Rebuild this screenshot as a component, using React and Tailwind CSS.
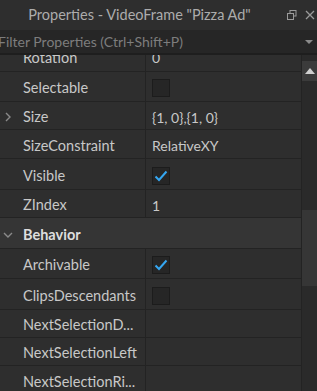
const font = { fontFamily: "Lato, 'Noto Sans', sans-serif" };

function Chevron({ down }) {
  return (
    <svg width="10" height="10" viewBox="0 0 10 10" className="absolute left-[3px]">
      <path
        d={down ? "M1 3 L5 7 L9 3" : "M3 1 L7 5 L3 9"}
        fill="none"
        stroke="#8a8a8a"
        strokeWidth="1.4"
      />
    </svg>
  );
}

function Checkbox({ checked }) {
  return (
    <div className="w-[18px] h-[18px] bg-[#262626] border border-[#1c1c1c] flex items-center justify-center">
      {checked && (
        <svg width="16" height="16" viewBox="0 0 16 16">
          <path d="M2.5 8.5 L6 12 L13.5 3.5" fill="none" stroke="#35a7f2" strokeWidth="2" />
        </svg>
      )}
    </div>
  );
}

function Row({ label, value, h, expand }) {
  return (
    <div className={`flex border-b border-[#232323] ${h}`}>
      <div className="w-[146px] shrink-0 flex items-center relative border-r border-[#232323] pt-[3px]">
        {expand && <Chevron />}
        <span className="pl-[23px] text-[14.5px] text-[#c8c8c8] whitespace-nowrap">{label}</span>
      </div>
      <div className="flex-1 flex items-center pl-[6px] text-[14px] text-[#c8c8c8] pt-[3px]">{value}</div>
    </div>
  );
}

export default function App() {
  return (
    <div className="w-[317px] h-[391px] bg-[#2e2e2e] overflow-hidden flex flex-col" style={font}>
      <div className="h-[30px] shrink-0 flex items-center bg-[#2e2e2e]">
        <div className="flex-1 text-center text-[14.5px] text-[#acacac] pr-[8px] whitespace-nowrap">
          Properties - VideoFrame "Pizza Ad"
        </div>
        <div className="flex items-center gap-[8px] pr-[2px]">
          <svg width="10" height="10" viewBox="0 0 10 10">
            <rect x="3" y="0.5" width="6" height="5.5" fill="none" stroke="#9a9a9a" />
            <rect x="0.5" y="3.5" width="6" height="6" fill="#2e2e2e" stroke="#9a9a9a" />
          </svg>
          <svg width="10" height="10" viewBox="0 0 10 10">
            <path d="M1 1 L9 9 M9 1 L1 9" stroke="#9a9a9a" strokeWidth="1.3" />
          </svg>
        </div>
      </div>
      <div className="h-[25px] shrink-0 flex items-center bg-[#262626] border-b-2 border-[#1e1e1e]">
        <span className="flex-1 text-[14px] text-[#7d7d7d] -ml-[2px] whitespace-nowrap">
          Filter Properties (Ctrl+Shift+P)
        </span>
        <svg width="8" height="6" viewBox="0 0 8 6" className="mr-[4px]">
          <path d="M0 1 L8 1 L4 5 Z" fill="#8a8a8a" />
        </svg>
      </div>
      <div className="flex-1 flex overflow-hidden">
        <div className="flex-1 flex flex-col overflow-hidden border-r border-[#232323]">
          <div className="-mt-[14px] flex flex-col">
            <Row label="Rotation" value="0" h="h-[31px]" />
            <Row label="Selectable" value={<Checkbox />} h="h-[30px]" />
            <Row label="Size" value="{1, 0},{1, 0}" h="h-[28px]" expand />
            <Row label="SizeConstraint" value="RelativeXY" h="h-[29px]" />
            <Row label="Visible" value={<Checkbox checked />} h="h-[31px]" />
            <Row label="ZIndex" value="1" h="h-[28px]" />
            <div className="flex items-center h-[31px] bg-[#353535] border-b border-[#232323] relative pt-[3px]">
              <Chevron down />
              <span className="pl-[23px] text-[14.5px] font-bold text-[#dedede]">Behavior</span>
            </div>
            <Row label="Archivable" value={<Checkbox checked />} h="h-[30px]" />
            <Row label="ClipsDescendants" value={<Checkbox />} h="h-[31px]" />
            <Row label="NextSelectionD..." value="" h="h-[28px]" />
            <Row label="NextSelectionLeft" value="" h="h-[28px]" />
            <Row label="NextSelectionRi..." value="" h="h-[29px]" />
          </div>
        </div>
        <div className="w-[15px] shrink-0 flex flex-col bg-[#2a2a2a]">
          <div className="h-[6px]" />
          <div className="h-[20px] bg-[#3b3b3b] flex items-center justify-center">
            <svg width="10" height="6" viewBox="0 0 10 6">
              <path d="M0 6 L5 0 L10 6 Z" fill="#cfcfcf" />
            </svg>
          </div>
          <div className="h-[129px]" />
          <div className="h-[76px] bg-[#363636]" />
        </div>
      </div>
    </div>
  );
}
